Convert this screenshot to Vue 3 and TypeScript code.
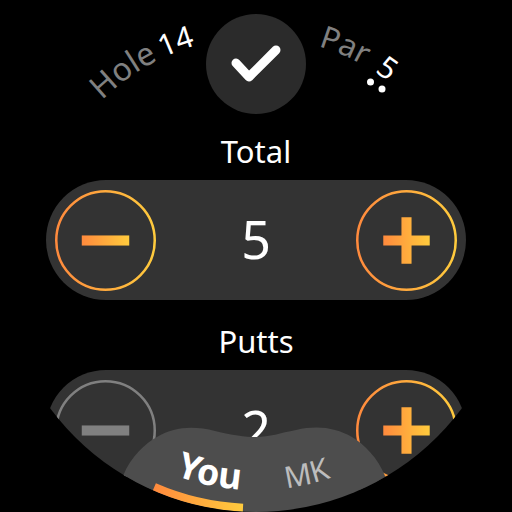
<template>
  <div class="watch">
    <button class="confirm">
      <svg width="50" height="42" viewBox="0 0 50 42">
        <path d="M5 20 L18 34 L45 7" class="check" />
      </svg>
    </button>

    <section v-for="row in rows" :key="row.label" class="counter">
      <div class="label">{{ row.label }}</div>
      <div class="pill">
        <svg class="round" viewBox="0 0 100 100">
          <circle cx="50" cy="50" r="48.75" class="ring" :stroke="row.canMinus ? 'url(#warm)' : '#808080'" />
          <rect x="26.5" y="45" width="47" height="10" :fill="row.canMinus ? 'url(#warm)' : '#808080'" />
        </svg>
        <span class="value">{{ row.value }}</span>
        <svg class="round" viewBox="0 0 100 100">
          <circle cx="50" cy="50" r="48.75" class="ring" stroke="url(#warm)" />
          <path d="M27 45H45V27H55V45H73V55H55V73H45V55H27Z" fill="url(#warm)" />
        </svg>
      </div>
    </section>

    <svg class="overlay" viewBox="0 0 512 512">
      <defs>
        <linearGradient id="warm" x1="0" y1="0" x2="1" y2="0" gradientUnits="objectBoundingBox">
          <stop offset="0" stop-color="#ff8a3d" />
          <stop offset="1" stop-color="#ffcb3d" />
        </linearGradient>
        <path id="topArc" d="M37 256 A219 219 0 0 1 475 256" />
        <path id="bottomArc" d="M22 256 A234 234 0 0 0 490 256" />
      </defs>

      <text class="arc-text" font-size="32" fill="#808080">
        <textPath href="#topArc" startOffset="173">Hole</textPath>
      </text>
      <text class="arc-text" font-size="30" fill="#fff">
        <textPath href="#topArc" startOffset="248">14</textPath>
      </text>
      <text class="arc-text" font-size="31" fill="#808080">
        <textPath href="#topArc" startOffset="407">Par</textPath>
      </text>
      <text class="arc-text" font-size="30" fill="#fff">
        <textPath href="#topArc" startOffset="469">5</textPath>
      </text>
      <circle cx="370.5" cy="82" r="3.5" fill="#fff" />
      <circle cx="382" cy="89" r="3.5" fill="#fff" />

      <path class="tab-bg" d="M123 476 C131 456 146 443 157 437 C175 426 195 426 215 431 C232 435 245 437 256 437 C270 437 280 433 296 430 C318 425 336 428 352 437 C364 444 378 458 385 476 L385 512 L123 512 Z" />
      <path class="tab-line" stroke="url(#warm)" d="M154.3 487 A252 252 0 0 0 243 507.7" />
      <text class="arc-text you" font-size="36">
        <textPath href="#bottomArc" startOffset="285">You</textPath>
      </text>
      <text class="arc-text mk" font-size="30">
        <textPath href="#bottomArc" startOffset="398">MK</textPath>
      </text>
    </svg>
  </div>
</template>

<script setup lang="ts">
const rows = [
  { label: 'Total', value: 5, canMinus: true },
  { label: 'Putts', value: 2, canMinus: false },
]
</script>

<style>
body {
  background: #000;
}
</style>

<style scoped>
.watch {
  position: relative;
  width: 512px;
  height: 512px;
  overflow: hidden;
  border-radius: 50%;
  background: #000;
  display: flex;
  flex-direction: column;
  align-items: center;
  padding-top: 14px;
  box-sizing: border-box;
  font-family: "Noto Sans", sans-serif;
  color: #fff;
}

.confirm {
  width: 100px;
  height: 100px;
  flex: none;
  padding: 0;
  border: 0;
  border-radius: 50%;
  background: #2b2b2b;
  display: flex;
  align-items: center;
  justify-content: center;
}

.check {
  fill: none;
  stroke: #fff;
  stroke-width: 9;
  stroke-linecap: round;
  stroke-linejoin: round;
}

.counter {
  display: flex;
  flex-direction: column;
  align-items: center;
}

.label {
  height: 66px;
  line-height: 74px;
  font-size: 31px;
}

.counter + .counter .label {
  height: 70px;
  line-height: 82px;
}

.pill {
  width: 420px;
  height: 120px;
  box-sizing: border-box;
  padding: 0 9px;
  border-radius: 60px;
  background: #333;
  display: flex;
  align-items: center;
  justify-content: space-between;
}

.round {
  width: 101px;
  height: 101px;
}

.ring {
  fill: none;
  stroke-width: 2.5;
}

.value {
  font-size: 52px;
  line-height: 1;
  padding-bottom: 3px;
}

.overlay {
  position: absolute;
  inset: 0;
  width: 512px;
  height: 512px;
}

.arc-text {
  font-family: "Noto Sans", sans-serif;
}

.tab-bg {
  fill: #4d4d4d;
}

.tab-line {
  fill: none;
  stroke-width: 8;
}

.you {
  fill: #fff;
  font-weight: 700;
}

.mk {
  fill: #bdbdbd;
}
</style>
